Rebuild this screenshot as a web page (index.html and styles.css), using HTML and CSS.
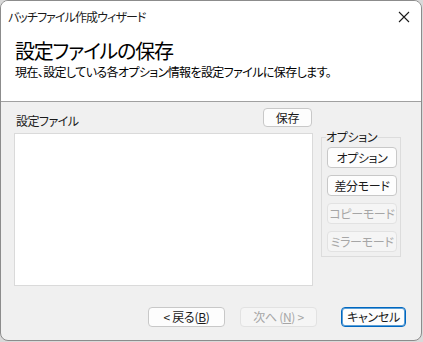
FILE: index.html
```html
<!DOCTYPE html>
<html lang="ja">
<head>
  <meta charset="UTF-8">
  <title>バッチファイル作成ウィザード</title>
  <link rel="stylesheet" href="styles.css">
</head>
<body>

  <div class="window">
    <div class="header">
      <div class="titlebar">
        <span class="title">バッチファイル作成ウィザード</span>
        <svg class="close" width="12" height="12" viewBox="0 0 12 12">
          <path d="M1 1 L11 11 M11 1 L1 11" stroke="#1b1b1b" stroke-width="1.1" fill="none"/>
        </svg>
      </div>
      <h1 class="heading">設定ファイルの保存</h1>
      <p class="subtitle">現在、設定している各オプション情報を設定ファイルに保存します。</p>
    </div>

    <div class="content">
      <div class="main">
        <div class="left">
          <div class="toprow">
            <span class="label">設定ファイル</span>
            <button class="btn save">保存</button>
          </div>
          <div class="listbox"></div>
        </div>

        <fieldset class="group">
          <legend>オプション</legend>
          <button class="btn opt">オプション</button>
          <button class="btn opt">差分モード</button>
          <button class="btn opt" disabled>コピーモード</button>
          <button class="btn opt" disabled>ミラーモード</button>
        </fieldset>
      </div>

      <div class="footer">
        <button class="btn nav">&lt; 戻る(<u>B</u>)</button>
        <button class="btn nav" disabled>次へ (<u>N</u>) &gt;</button>
        <button class="btn cancel">キャンセル</button>
      </div>
    </div>
  </div>

</body>
</html>
```

FILE: styles.css
```css
body {
  margin: 0;
  background: #d9d9d9;
  font-family: "Noto Sans CJK JP", "Noto Sans", sans-serif;
  font-size: 12px;
  font-feature-settings: "palt";
  color: #1a1a1a;
}

.window {
  width: 422px;
  height: 341px;
  box-sizing: border-box;
  border: 1px solid #8c8c8c;
  border-radius: 8px;
  overflow: hidden;
  background: #f0f0f0;
}

.header {
  background: #ffffff;
  height: 100px;
  border-bottom: 1px solid #a0a0a0;
}

.titlebar {
  height: 30px;
  display: flex;
  align-items: center;
  justify-content: space-between;
  padding: 0 11px 0 7px;
}

.title {
  font-size: 12px;
  line-height: 16px;
  letter-spacing: -0.9px;
  margin-top: 1px;
}

.close {
  margin-top: 1px;
}

.heading {
  margin: 7px 0 0 14px;
  font-size: 20px;
  line-height: 26px;
  font-weight: normal;
  letter-spacing: -1.2px;
  color: #000;
}

.subtitle {
  margin: 0 0 0 14px;
  font-size: 12px;
  line-height: 16px;
  letter-spacing: -0.6px;
  color: #000;
}

.content {
  padding: 6px 0 0 13px;
}

.main {
  display: flex;
  gap: 8px;
}

.left {
  width: 299px;
}

.toprow {
  display: flex;
  justify-content: space-between;
  align-items: flex-end;
  height: 25px;
}

.label {
  line-height: 16px;
  letter-spacing: -0.5px;
  margin: 0 0 4px 2px;
}

.btn {
  font-family: inherit;
  font-size: 12px;
  font-feature-settings: "palt";
  line-height: 16px;
  letter-spacing: -0.3px;
  white-space: nowrap;
  color: #1a1a1a;
  background: #fdfdfd;
  border: 1px solid #c8c8c8;
  border-radius: 4px;
  padding: 0;
  box-sizing: border-box;
}

.btn:disabled {
  color: #a6a6a6;
  background: #f5f5f5;
  border-color: #e2e2e2;
}

.save {
  width: 49px;
  height: 19px;
  align-self: flex-start;
  margin-right: 1px;
}

.listbox {
  width: 299px;
  height: 153px;
  box-sizing: border-box;
  background: #ffffff;
  border: 1px solid #dadada;
}

.group {
  margin: 22px 0 0 0;
  width: 80px;
  height: 127px;
  box-sizing: border-box;
  border: 1px solid #dcdcdc;
  padding: 3px 0 0 5px;
  display: flex;
  flex-direction: column;
  gap: 7px;
}

.group legend {
  padding: 0 1px 0 0;
  margin-left: -1px;
  line-height: 14px;
  letter-spacing: -0.3px;
}

.opt {
  width: 70px;
  height: 21px;
}

.footer {
  display: flex;
  margin: 21px 0 0 134px;
}

.nav {
  width: 77px;
  height: 20px;
  margin-right: 15px;
}

.cancel {
  width: 65px;
  height: 20px;
  margin-left: 9px;
  border: 1px solid #0067c0;
  box-shadow: inset 0 0 0 1px #5b9fd6;
}
```
